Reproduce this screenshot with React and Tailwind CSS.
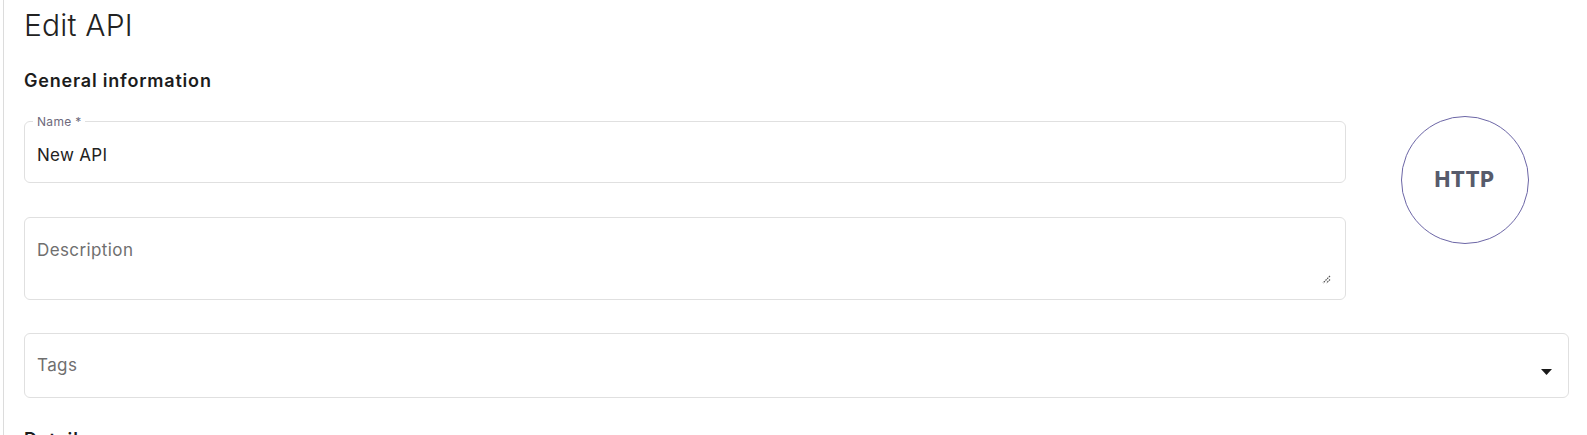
import React from 'react';

const font = { fontFamily: 'Inter, "Noto Sans", sans-serif' };

const App = () => {
  return (
    <div className="h-[435px] w-full overflow-hidden bg-white" style={font}>
      <div className="ml-[3px] h-full border-l border-[#dcdcdc] pl-[20px] pr-[18px]">
        {/* Header */}
        <h1 className="pt-[7px] text-[30px] font-light leading-[36px] tracking-[0.2px] text-[#222]">Edit API</h1>
        <h2 className="mt-[26px] text-[18px] font-semibold leading-[24px] tracking-[0.8px] text-[#1c1c1c]">
          General information
        </h2>

        {/* General info */}
        <div className="mt-[28px] flex">
          <div className="flex w-[1322px] flex-col gap-[34px]">
            <div className="relative h-[62px] rounded-md border border-[#e0e0e0] px-[12px] pt-[23px]">
              <span className="absolute -top-[7px] left-[8px] bg-white px-[4px] text-[12px] leading-[14px] tracking-[0.3px] text-[#6e6a7c]">
                Name *
              </span>
              <div className="text-[17px] leading-[20px] tracking-[0.3px] text-[#222]">New API</div>
            </div>
            <div className="relative h-[83px] rounded-md border border-[#e0e0e0] px-[12px] pt-[22px]">
              <div className="text-[17px] leading-[20px] tracking-[0.4px] text-[#6f6f6f]">Description</div>
              <svg className="absolute bottom-[15px] right-[14px]" width="10" height="10" viewBox="0 0 10 10">
                <path d="M9 2 L2 9 M9 5.5 L5.5 9" stroke="#555" strokeWidth="1.2" strokeDasharray="1.6 0.8" />
              </svg>
            </div>
          </div>
          <div className="flex flex-1 justify-center pl-[14px]">
            <div className="-mt-[5px] flex h-[128px] w-[128px] items-center justify-center rounded-full border border-[#6c66a6]">
              <span className="text-[21px] font-extrabold tracking-[0.6px] text-[#575b6b]">HTTP</span>
            </div>
          </div>
        </div>

        {/* Tags */}
        <div className="mt-[33px] flex h-[65px] items-start justify-between rounded-md border border-[#e0e0e0] pl-[12px] pr-[16px] pt-[21px]">
          <div className="text-[17px] leading-[20px] tracking-[0.4px] text-[#6f6f6f]">Tags</div>
          <svg className="mt-[14px]" width="11" height="6" viewBox="0 0 11 6">
            <path d="M0 0 L11 0 L5.5 6 Z" fill="#1a1a1a" />
          </svg>
        </div>

        <h2 className="mt-[30px] text-[18px] font-semibold leading-[24px] tracking-[0.8px] text-[#1c1c1c]">Details</h2>
      </div>
    </div>
  );
};

export default App;
